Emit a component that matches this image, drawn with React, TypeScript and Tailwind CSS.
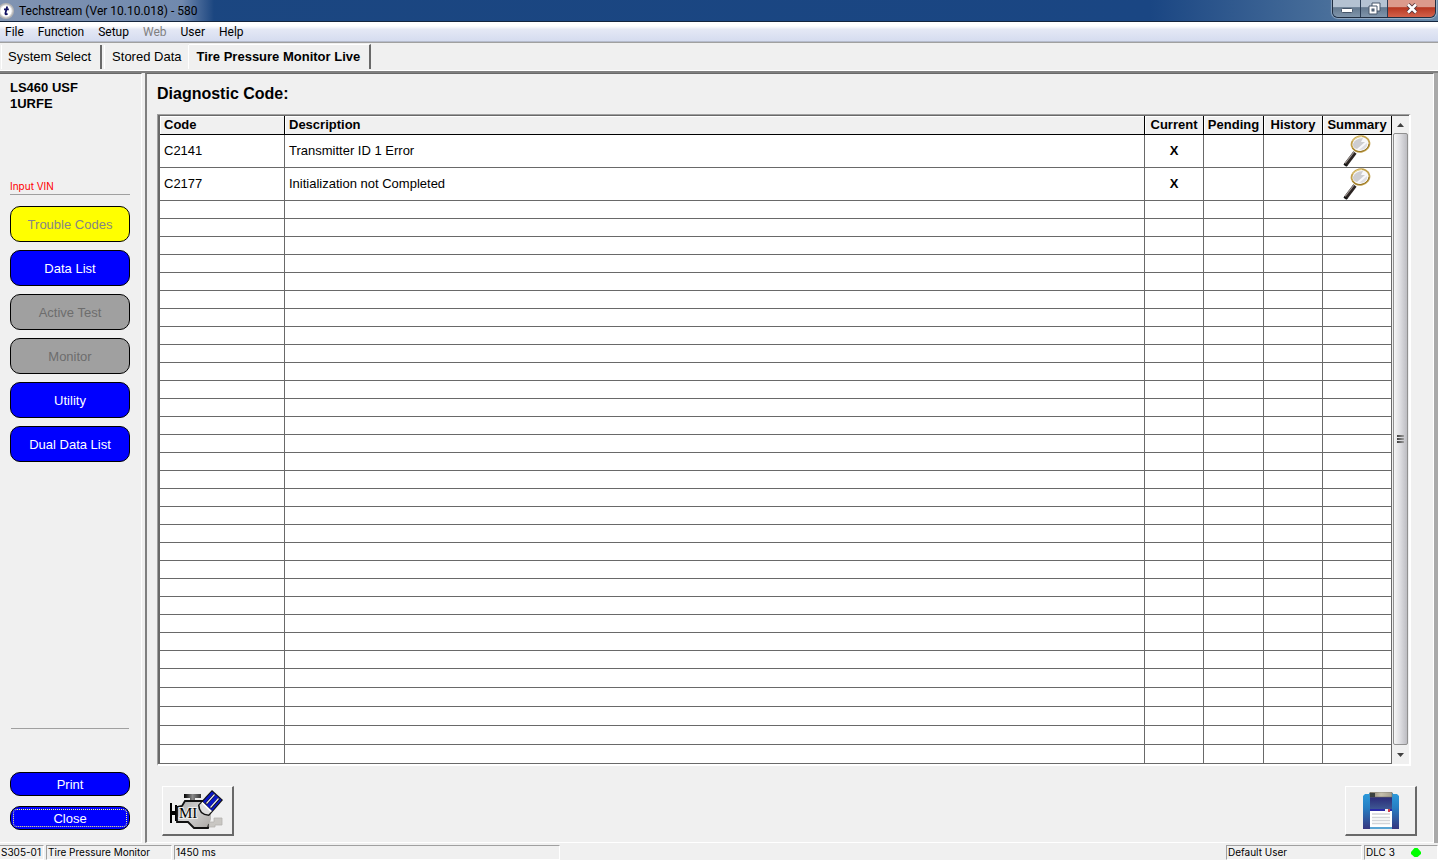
const menuItems = ["File", "Function", "Setup", "Web", "User", "Help"];

const sideButtons = [
  { label: "Trouble Codes", style: "bg-[#ffff00] text-[#868686]" },
  { label: "Data List", style: "bg-[#0000ff] text-white" },
  { label: "Active Test", style: "bg-[#a0a0a0] text-[#6d6d6d]" },
  { label: "Monitor", style: "bg-[#a0a0a0] text-[#6d6d6d]" },
  { label: "Utility", style: "bg-[#0000ff] text-white" },
  { label: "Dual Data List", style: "bg-[#0000ff] text-white" },
];

const codes = [
  { code: "C2141", description: "Transmitter ID 1 Error" },
  { code: "C2177", description: "Initialization not Completed" },
];

// Empty rows below the codes, the last five are one pixel taller
const emptyRows = Array.from({ length: 31 }, (_, i) => (i < 26 ? "h-[18px]" : "h-[19px]"));

const cell = "border-r border-b border-[#696969] p-0";
const head = "border-r border-b border-black bg-[#f0f0f0] p-0 font-bold shadow-[inset_1px_1px_0_white]";

function AppIcon() {
  return (
    <svg width="15" height="17" viewBox="0 0 15 17" aria-hidden="true">
      <circle cx="6" cy="9" r="8" fill="#b4b4b4" />
      <circle cx="6" cy="9" r="6.2" fill="#fff" stroke="#d8d8d8" />
      <path d="M7.2 4.5 L5.4 11.3 Q5.2 13 7.6 11.8 M4 7.4 H8.8" fill="none" stroke="#101060" strokeWidth="1.8" />
    </svg>
  );
}

function MagnifierIcon() {
  return (
    <svg width="28" height="32" viewBox="0 0 28 32" aria-hidden="true">
      <path d="M2.5 30 L12 17.5" stroke="#2b2422" strokeWidth="4" />
      <path d="M2 28.5 L11 17" stroke="#a49c98" strokeWidth="1.2" />
      <path d="M1 29 L4 31" stroke="#111" strokeWidth="2" />
      <ellipse cx="17.5" cy="9" rx="9" ry="7.8" transform="rotate(-12 17.5 9)" fill="#f8f8fa" stroke="#c2a04a" strokeWidth="1.8" />
      <path d="M10 9 Q12 3.5 20 3 L18 7 L22 7 L14 14 Q9.5 13 10 9Z" fill="#cdcdd0" />
      <path d="M16 15 L24 8 Q25 12 20 14.5Z" fill="#dedee2" />
      <path d="M9.5 13 Q12 17 18 16.5 Q25 15 26 9" fill="none" stroke="#8a6a1c" strokeWidth="0.8" />
      <path d="M9.5 6 Q13 1.5 19 1.6" fill="none" stroke="#f1df9c" strokeWidth="0.8" />
    </svg>
  );
}

function EngineIcon() {
  return (
    <svg width="56" height="42" viewBox="0 0 56 42" aria-hidden="true">
      <defs>
        <linearGradient id="engine" x1="0" y1="0" x2="1" y2="1">
          <stop offset="0" stopColor="#a8a8a8" />
          <stop offset="0.45" stopColor="#d2d2d2" />
          <stop offset="1" stopColor="#aaa6a2" />
        </linearGradient>
        <linearGradient id="cap" x1="0" y1="0" x2="1" y2="0">
          <stop offset="0" stopColor="#000" />
          <stop offset="0.5" stopColor="#8a8a8a" />
          <stop offset="1" stopColor="#333" />
        </linearGradient>
      </defs>
      <path d="M14 4 H31 V8 H25 V11 H20 V8 H14Z" fill="url(#cap)" />
      <path d="M0 13 H2 V21 H5 V15 H7 V31 H5 V25 H2 V33 H0Z" fill="#000" />
      <path d="M15 11 H36 L41 18 V29 L38 38 H24 L18 32 H7 V17 L12 16Z" fill="url(#engine)" />
      <path d="M36 11 H15 L12 16 L7 17 V32 H18 L24 38 H38 L39 34" fill="none" stroke="#111" strokeWidth="1.8" />
      <path d="M39 32 H44 V28 H52 V35 H45 V37 H39Z" fill="#c9c7c3" stroke="#b5b2ae" strokeWidth="0.8" />
      <text x="9" y="28" fontSize="15" fontFamily="Liberation Serif, serif" fill="#000" stroke="#eee" strokeWidth="2" paintOrder="stroke">MI</text>
      <path d="M28 15 L42 0 L53 10 L39 26 Q28 25 28 15Z" fill="#111" />
      <path d="M33 11.5 L42 1.5 L51.5 10 L42 21Z" fill="#0b18c8" />
      <path d="M29.5 15 L32.5 12 L42 21 L38.5 24.5 Q30 24 29.5 15Z" fill="#dedede" />
      <path d="M36 14 L44.5 4.5 M40.5 18 L49 8.5" stroke="#111" strokeWidth="2.6" />
      <path d="M36.5 13.5 L44.5 4.5 M40.5 17.5 L48.5 8.5" stroke="#e8e8f4" strokeWidth="1.2" />
      <path d="M32 12.5 L41 21.5" stroke="#fff" strokeWidth="1.6" />
    </svg>
  );
}

function FloppyIcon() {
  return (
    <svg width="36" height="38" viewBox="0 0 36 38" aria-hidden="true">
      <defs>
        <linearGradient id="disk" x1="0" y1="0" x2="0" y2="1">
          <stop offset="0" stopColor="#2c9bdc" />
          <stop offset="0.4" stopColor="#267fc4" />
          <stop offset="1" stopColor="#37367f" />
        </linearGradient>
        <linearGradient id="face" x1="0" y1="0" x2="0" y2="1">
          <stop offset="0" stopColor="#2b2b78" />
          <stop offset="0.8" stopColor="#3d5792" />
          <stop offset="1" stopColor="#2b2b9a" />
        </linearGradient>
        <linearGradient id="shutter" x1="0" y1="0" x2="1" y2="0">
          <stop offset="0" stopColor="#8b7f70" />
          <stop offset="0.5" stopColor="#c5bfac" />
          <stop offset="1" stopColor="#a39d8e" />
        </linearGradient>
      </defs>
      <path d="M2 2 H6 V1 H30 V2 H34 L36 4 V37 H0 V4Z" fill="url(#disk)" />
      <rect x="7" y="5" width="22" height="15" fill="url(#face)" />
      <rect x="7" y="0" width="22" height="5" fill="url(#shutter)" stroke="#77736a" strokeWidth="0.6" />
      <rect x="7" y="1" width="5" height="4" fill="#3a403f" />
      <rect x="7" y="17" width="22" height="2" fill="#2a2aa8" />
      <rect x="7" y="19" width="22" height="16" fill="#fff" />
      <path d="M9 22 H27 M9 25.5 H27 M9 28.5 H27 M9 31.5 H27" stroke="#d3d5d8" strokeWidth="1.4" />
      <rect x="22" y="17" width="5" height="3" fill="#f4f4f4" />
      <rect x="25" y="17" width="2" height="3" fill="#d23b4a" />
      <rect x="7" y="35" width="22" height="2" fill="#5aa5d4" />
    </svg>
  );
}

function TitleBar() {
  const winButton = "flex items-center justify-center border-r border-[#2b3d55] bg-linear-to-b from-[#b4c2d2] from-40% via-[#64798f] via-45% to-[#8095ab]";
  return (
    <header className="flex h-[22px] items-start justify-between border-b border-[#14253d] bg-linear-to-r from-[#1b4680] via-[#1a4683] via-80% to-[#6688a8]">
      <div className="flex h-full items-center gap-1 bg-linear-to-r from-[#8194b2] via-[#7089ae] via-85% to-[#1b4680] pr-4">
        <AppIcon />
        <h1 className="text-xs text-black">Techstream (Ver 10.10.018) - 580</h1>
      </div>
      <div className="mr-[2px] flex h-[18px] overflow-hidden rounded-b-md border border-t-0 border-[#1f2d40] shadow-[0_0_1px_1px_rgba(255,255,255,0.4)]">
        <button aria-label="Minimize" className={`w-7 ${winButton}`}>
          <svg width="12" height="12" viewBox="0 0 12 12"><rect x="0.5" y="5.5" width="11" height="4" rx="1" fill="#fff" stroke="#46566a" /></svg>
        </button>
        <button aria-label="Restore" className={`w-[27px] ${winButton}`}>
          <svg width="13" height="13" viewBox="0 0 13 13">
            <path d="M4 1 H12 V9 H9 V12 H1 V4 H4Z" fill="#fff" stroke="#46566a" />
            <path d="M4 4 H9 V9" fill="none" stroke="#46566a" />
            <rect x="4" y="7" width="2" height="2" fill="#7f92a6" stroke="#46566a" />
          </svg>
        </button>
        <button aria-label="Close window" className="flex w-[47px] items-center justify-center bg-linear-to-b from-[#dc9a8c] from-40% via-[#b73620] via-45% to-[#d3614a]">
          <svg width="12" height="11" viewBox="0 0 12 11">
            <path d="M2 1.5 L10 9.5 M10 1.5 L2 9.5" stroke="#53343a" strokeWidth="4.4" />
            <path d="M2 1.5 L10 9.5 M10 1.5 L2 9.5" stroke="#fff" strokeWidth="2.6" />
          </svg>
        </button>
      </div>
    </header>
  );
}

function Sidebar() {
  return (
    <aside className="flex w-[142px] shrink-0 flex-col border-t border-t-[#696969] border-r border-b border-r-white border-b-white pr-[11px] pb-3 pl-[10px]">
      <div className="h-[105px] pt-[6px] text-[13px] leading-4 font-bold">
        <p>LS460 USF</p>
        <p>1URFE</p>
      </div>
      <a href="#vin" className="border-b border-[#a0a0a0] pb-px font-['Inter','Liberation_Sans',sans-serif] text-[10px] leading-[14px] text-[#ff0000]">Input VIN</a>
      <nav className="mt-[11px] flex flex-col gap-2">
        {sideButtons.map((b) => (
          <button key={b.label} className={`h-9 rounded-[10px] border border-black pt-px text-[13px] ${b.style}`}>
            {b.label}
          </button>
        ))}
      </nav>
      <div className="mx-px mt-auto mb-[43px] border-b border-[#a0a0a0]" />
      <div className="flex flex-col gap-[10px]">
        <button className="h-6 rounded-[10px] border border-black bg-[#0000ff] pt-px text-[13px] text-white">Print</button>
        <button className="flex h-6 rounded-[10px] border border-black bg-[#0000ff] p-[2px] text-[13px] text-white">
          <span className="flex h-full w-full items-center justify-center rounded-sm border border-dotted border-[#ffff80] pt-px">Close</span>
        </button>
      </div>
    </aside>
  );
}

function CodeTable() {
  return (
    <div className="flex min-h-0 flex-1 border-t border-r-2 border-b-2 border-l border-t-[#a0a0a0] border-r-white border-b-white border-l-[#a0a0a0]">
      <div className="min-w-0 flex-1 overflow-hidden border-t border-l-2 border-[#696969] bg-white">
        <table className="w-full table-fixed border-separate border-spacing-0 text-[13px]">
          <colgroup>
            <col className="w-[125px]" />
            <col />
            <col className="w-[59px]" />
            <col className="w-[60px]" />
            <col className="w-[59px]" />
            <col className="w-[69px]" />
          </colgroup>
          <thead>
            <tr className="h-[19px] leading-[18px]">
              <th className={`${head} pl-1 text-left`}>Code</th>
              <th className={`${head} pl-1 text-left`}>Description</th>
              <th className={head}>Current</th>
              <th className={head}>Pending</th>
              <th className={head}>History</th>
              <th className={head}>Summary</th>
            </tr>
          </thead>
          <tbody>
            {codes.map((c) => (
              <tr key={c.code} className="h-[33px]">
                <td className={`${cell} pl-1`}>{c.code}</td>
                <td className={`${cell} pl-1`}>{c.description}</td>
                <td className={`${cell} text-center font-bold`}>X</td>
                <td className={cell} />
                <td className={cell} />
                <td className={cell}>
                  <button aria-label={`Summary of ${c.code}`} className="mx-auto block h-8">
                    <MagnifierIcon />
                  </button>
                </td>
              </tr>
            ))}
            {emptyRows.map((height, i) => (
              <tr key={i} className={height}>
                <td className={cell} />
                <td className={cell} />
                <td className={cell} />
                <td className={cell} />
                <td className={cell} />
                <td className={cell} />
              </tr>
            ))}
          </tbody>
        </table>
      </div>
      {/* Scrollbar */}
      <div className="flex w-[17px] flex-col items-center border-t border-[#696969] bg-[#f0f0f0]">
        <button aria-label="Scroll up" className="flex h-[17px] items-center justify-center">
          <svg width="7" height="4" viewBox="0 0 7 4"><path d="M0 4 L3.5 0 L7 4Z" fill="#404040" /></svg>
        </button>
        <div className="flex w-[15px] flex-1 flex-col items-center justify-center gap-px rounded-xs border border-[#909090] bg-linear-to-r from-[#f5f5f5] via-[#dcdce0] to-[#bdbdc2]">
          <span className="h-[2px] w-[7px] bg-linear-to-r from-[#404040] to-[#a0a0a0]" />
          <span className="h-[2px] w-[7px] bg-linear-to-r from-[#404040] to-[#a0a0a0]" />
          <span className="h-[2px] w-[7px] bg-linear-to-r from-[#404040] to-[#a0a0a0]" />
        </div>
        <button aria-label="Scroll down" className="flex h-[19px] items-center justify-center">
          <svg width="7" height="4" viewBox="0 0 7 4"><path d="M0 0 L3.5 4 L7 0Z" fill="#404040" /></svg>
        </button>
      </div>
    </div>
  );
}

export default function App() {
  const raised = "flex h-[50px] w-[72px] items-center justify-center border-t border-r-2 border-b-2 border-l border-t-white border-r-[#696969] border-b-[#696969] border-l-white";
  const status = "flex items-center border-t border-r border-b border-l border-t-[#a0a0a0] border-r-white border-b-white border-l-[#a0a0a0] pl-px";

  return (
    <div className="flex h-screen flex-col overflow-hidden bg-[#f0f0f0] font-['Liberation_Sans',Arial,sans-serif] text-black">
      <div className="font-['Roboto','Segoe_UI',sans-serif]">
        <TitleBar />
        {/* Menu */}
        <nav className="flex h-5 items-center gap-[14px] border-b border-[#b6bccc] bg-linear-to-b from-white from-20% via-[#e4e8f5] via-40% to-[#d5dcef] px-[5px] text-xs">
          {menuItems.map((item) => (
            <button key={item} className={item === "Web" ? "text-[#808080]" : ""}>{item}</button>
          ))}
        </nav>
      </div>

      {/* Tabs */}
      <div className="flex h-[29px] border-t border-b border-t-[#a0a0a0] border-b-white pt-px text-[13px]">
        <button className="my-px ml-px border-r-2 border-l border-r-[#696969] border-l-white pr-[9px] pl-[6px]">System Select</button>
        <button className="my-px ml-[2px] border-r border-l border-white px-[7px]">Stored Data</button>
        <button className="mb-px border-t border-r-2 border-t-white border-r-[#696969] pr-[9px] pl-[7px] font-bold">Tire Pressure Monitor Live</button>
      </div>

      <div className="flex min-h-0 flex-1 border-t-2 border-[#808080]">
        <Sidebar />
        <main className="ml-[3px] flex min-w-0 flex-1 flex-col border-t border-r border-b border-l-2 border-t-[#696969] border-r-white border-b-white border-l-[#808080] pr-[22px] pb-[6px] pl-[10px]">
          <h2 className="py-2 text-base">
            <span className="font-bold">Diagnostic Code:</span>
          </h2>
          <CodeTable />
          <div className="mt-5 flex justify-between pl-[5px]">
            <button aria-label="Clear codes" className={raised}><EngineIcon /></button>
            <button aria-label="Save" className={`${raised} -mr-[6px]`}><FloppyIcon /></button>
          </div>
        </main>
        <div className="w-1 bg-[#a9a9a9]" />
      </div>

      {/* Status bar */}
      <footer className="flex h-[17px] gap-[2px] pt-[2px] font-['Inter','Liberation_Sans',sans-serif] text-[10px] leading-[13px]">
        <div className={`${status} w-11 border-l-0 pl-0`}>S305-01</div>
        <div className={`${status} w-[126px]`}>Tire Pressure Monitor</div>
        <div className={`${status} w-[386px]`}>1450 ms</div>
        <div className="flex-1" />
        <div className={`${status} w-[136px]`}>Default User</div>
        <div className={`${status} w-[74px] justify-between pr-4`}>
          DLC 3
          <svg width="10" height="10" viewBox="0 0 10 10" aria-hidden="true"><path d="M3.5 0 H6.5 L10 4 V6 L6.5 9 H3.5 L0 6 V4Z" fill="#00ff00" /></svg>
        </div>
      </footer>
    </div>
  );
}
